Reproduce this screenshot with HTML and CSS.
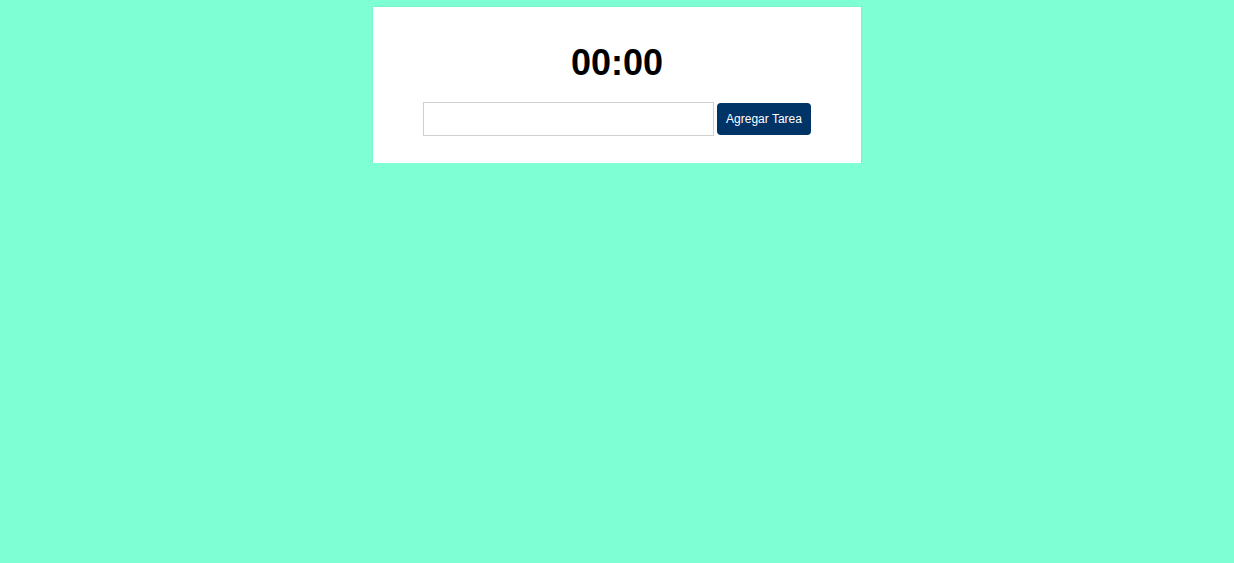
FILE: index.html
```html
<!DOCTYPE html>
<html lang="es">
<head>
<meta charset="utf-8">
<title>Temporizador</title>
<link rel="stylesheet" href="styles.css">
</head>
<body>
<div class="card">
  <h1 class="timer">00:00</h1>
  <div class="task-row">
    <input class="task-input" type="text">
    <button class="task-btn">Agregar Tarea</button>
  </div>
</div>
</body>
</html>
```

FILE: styles.css
```css
html, body {
  margin: 0;
  padding: 0;
}
body {
  background: #7fffd4;
  font-family: "Liberation Sans", Arial, sans-serif;
  padding-top: 7px;
}
.card {
  width: 488px;
  margin: 0 auto;
  background: #fff;
  box-sizing: border-box;
  padding: 35px 50px 27px;
  box-shadow: 0 0 2px rgba(0, 0, 0, 0.15);
  display: flex;
  flex-direction: column;
  align-items: center;
}
.timer {
  margin: 0 0 19px;
  font-size: 36px;
  font-weight: bold;
  line-height: 41px;
  color: #000;
}
.task-row {
  display: flex;
  align-items: center;
  gap: 3px;
}
.task-input {
  width: 291px;
  height: 34px;
  box-sizing: border-box;
  border: 1px solid #cfcfcf;
  padding: 0 6px;
  margin: 0;
  font-size: 14px;
  font-family: "Liberation Sans", Arial, sans-serif;
  outline: none;
}
.task-btn {
  width: 94px;
  height: 32px;
  margin: 0;
  padding: 0;
  border: none;
  border-radius: 4px;
  background: #003366;
  color: #fff;
  font-family: "Liberation Sans", Arial, sans-serif;
  font-size: 12px;
}
```
